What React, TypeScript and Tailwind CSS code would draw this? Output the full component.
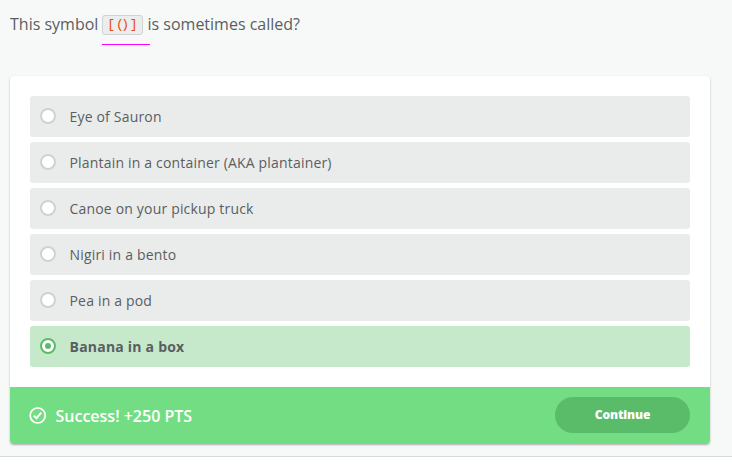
const options = [
  'Eye of Sauron',
  'Plantain in a container (AKA plantainer)',
  'Canoe on your pickup truck',
  'Nigiri in a bento',
  'Pea in a pod',
  'Banana in a box',
];

function Option({ label, selected }: { label: string; selected: boolean }) {
  return (
    <li
      className={`flex h-[41px] items-center rounded-[3px] pl-[10px] text-[14px] ${
        selected ? 'bg-[#c6e9cb] font-bold tracking-[0.22px]' : 'bg-[#eaeceb] tracking-[0.18px]'
      }`}
    >
      <span
        className={`-mt-px flex size-4 shrink-0 items-center justify-center rounded-full border-2 bg-white ${
          selected ? 'border-[#5abc69]' : 'border-[#d0d2d1]'
        }`}
      >
        {selected && <span className="size-1.5 rounded-full bg-[#5abc69]" />}
      </span>
      <span className="ml-[13.5px] whitespace-nowrap">{label}</span>
    </li>
  );
}

export default function App() {
  return (
    <div className="h-[467px] w-[732px] overflow-hidden bg-white font-['Open_Sans',sans-serif] text-[#5a5e62]">
      <main className="h-[457px] border-b border-[#d8dada] bg-[#f7f9f8] pl-[10px]">
        <h1 className="flex h-[76px] items-start whitespace-nowrap text-[16px] leading-[24px]">
          <span className="mt-3 w-[92px]">This symbol</span>
          <span className="mt-[15px] flex h-[30px] w-12 flex-col justify-between border-b border-[#ff00ff]">
            <code className="flex h-5 w-[41px] items-center justify-center rounded-[3px] border border-[#d0d3d2] bg-[#eceeed] pb-0.5 font-['Liberation_Mono',monospace] text-[13px] leading-none text-[#e9490c]">
              <span>
                <span className="tracking-[0.8px]">[</span>
                <span className="tracking-[-2.5px]">(</span>
                <span className="tracking-[0.8px]">)</span>]
              </span>
            </code>
          </span>
          <span className="-ml-[2.5px] mt-3">is sometimes called?</span>
        </h1>
        <section className="h-[368px] w-[700px] overflow-hidden rounded-[4px] bg-white shadow-[0_1px_2px_rgba(0,0,0,0.3)]">
          <ul className="flex h-[311px] flex-col gap-[5px] px-5 pt-5">
            {options.map((label, i) => (
              <Option key={label} label={label} selected={i === 5} />
            ))}
          </ul>
          <footer className="flex h-[57px] items-center justify-between bg-[#73dd84] px-5 text-white">
            <div className="flex items-center">
              <svg className="ml-[-1px] size-[17px]" viewBox="0 0 17 17" fill="none" stroke="currentColor">
                <circle cx="8.7" cy="8.5" r="7.5" strokeWidth="1.7" />
                <path d="M4.9 8.7 7.5 11.2 12.2 5.6" strokeWidth="2" />
              </svg>
              <span className="ml-[9.5px] text-[16px] font-semibold">Success! +250 PTS</span>
            </div>
            <button className="-mt-px h-9 w-[135px] rounded-full bg-[#5abc69] pb-px text-[12px] font-extrabold tracking-[-0.1px]">
              Continue
            </button>
          </footer>
        </section>
      </main>
    </div>
  );
}
